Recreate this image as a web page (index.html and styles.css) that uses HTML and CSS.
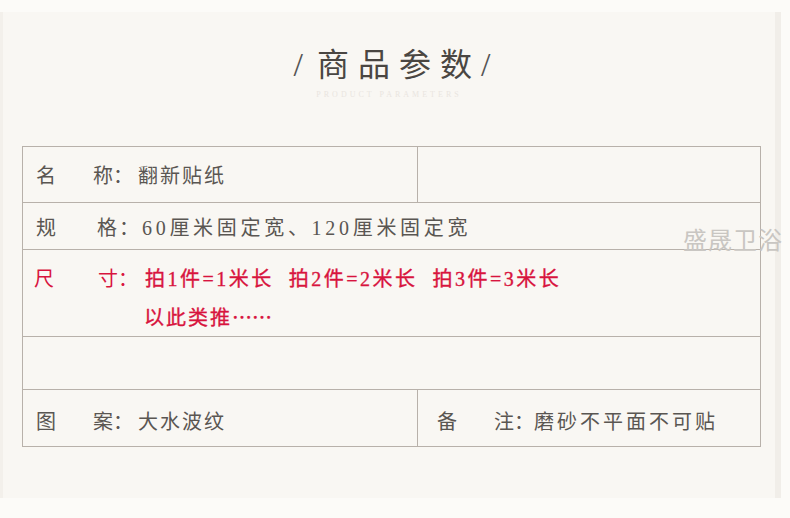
FILE: index.html
```html
<!DOCTYPE html>
<html lang="zh-CN">
<head>
  <meta charset="UTF-8" />
  <title>商品参数</title>
  <link rel="stylesheet" href="styles.css">
</head>
<body>
  <div class="page">
    <div class="head">
      <h2><span class="slash">/</span>商品参数<span class="slash">/</span></h2>
      <p class="sub">PRODUCT PARAMETERS</p>
    </div>

    <table class="params">
      <tr class="r1">
        <td><span class="k">名</span>称：<span class="v">翻新贴纸</span></td>
        <td class="blank"></td>
      </tr>
      <tr class="r2">
        <td colspan="2"><span class="k">规</span><span class="k2">格</span>：<span class="v wide">60厘米固定宽、120厘米固定宽</span></td>
      </tr>
      <tr class="r3 red">
        <td colspan="2">
          <div class="line"><span class="k">尺</span><span class="k3">寸</span>：<span class="v">拍1件=1米长&nbsp; 拍2件=2米长&nbsp; 拍3件=3米长</span></div>
          <div class="line more">以此类推<span class="dots">……</span></div>
        </td>
      </tr>
      <tr class="r4">
        <td colspan="2"></td>
      </tr>
      <tr class="r5">
        <td class="c-left"><span class="k">图</span>案：<span class="v">大水波纹</span></td>
        <td><span class="k">备</span>注：<span class="v tight">磨砂不平面不可贴</span></td>
      </tr>
    </table>

    <div class="mark">盛晟卫浴</div>
  </div>
</body>
</html>
```

FILE: styles.css
```css
* {
  margin: 0; padding: 0; box-sizing: border-box;
}

html, body {
  background: #fcfbf8;
  font-family: "Liberation Serif", "Noto Sans CJK SC", serif;
  color: #5a5652;
}

.page {
  position: relative;
  margin-top: 12px;
  width: 781px;
  height: 486px;
  background: #f9f7f3;
  border-left: 3px solid #f3f0eb;
  border-right: 6px solid #f1eee9;
}

.head {
  height: 134px;
  padding-top: 30px;
  text-align: center;
}

h2 {
  font-family: "Noto Sans CJK SC", sans-serif;
  font-weight: 400;
  font-size: 32px;
  line-height: 40px;
  letter-spacing: 9px;
  color: #4a4642;
  padding-left: 6px;
}

h2 .slash {
  font-family: "Liberation Serif", serif;
  font-size: 34px;
  font-weight: 400;
  letter-spacing: 0;
  margin: 0 14px 0 0;
  color: #555;
}

h2 .slash:last-child {
  margin: 0 0 0 0;
}

.sub {
  font-size: 8px;
  letter-spacing: 3px;
  color: #e9e5df;
  margin-top: 5px;
}

.params {
  margin-left: 19px;
  width: 739px;
  border-collapse: collapse;
  font-size: 20px;
}

.params td {
  border: 1px solid #b8b1aa;
  padding: 0 0 0 13px;
  white-space: nowrap;
  vertical-align: middle;
}

.k {
  display: inline-block;
  width: 57px;
}

.k2 {
  display: inline-block;
  width: 0;
  margin-left: 4px;
  margin-right: 22px;
}

.k3 {
  display: inline-block;
  margin-left: 5px;
}

.v {
  letter-spacing: 2px;
  margin-left: 5px;
}

.v.tight {
  margin-left: 0;
  letter-spacing: 3px;
}

.wide {
  letter-spacing: 3.7px;
  margin-left: 3px;
}

.r1 td { height: 56px; }
.r1 td:first-child { width: 392px; }
.r2 td { height: 47px; }
.r3 td { height: 87px; vertical-align: top; padding-top: 16px; }
.r4 td { height: 53px; }
.r5 td { height: 57px; padding-top: 4px; }
.r5 .c-left { width: 395px; }
.r5 td:last-child { padding-left: 19px; }

.red {
  color: #d8143e;
}

.red .k {
  margin-left: -2px;
  width: 59px;
}

.red .v {
  margin-left: 7px;
  letter-spacing: 2.5px;
  -webkit-text-stroke: 0.35px #d8143e;
}

.line {
  line-height: 26px;
}

.line.more {
  margin-top: 12px;
  padding-left: 108px;
  letter-spacing: 2px;
  -webkit-text-stroke: 0.35px #d8143e;
}

.dots {
  font-family: "Noto Sans CJK SC", sans-serif;
  letter-spacing: 0;
}

.mark {
  position: absolute;
  top: 209px;
  left: 680px;
  white-space: nowrap;
  font-family: "Noto Sans CJK SC", sans-serif;
  font-size: 24px;
  color: #c9c6c2;
  letter-spacing: 1px;
}
```
